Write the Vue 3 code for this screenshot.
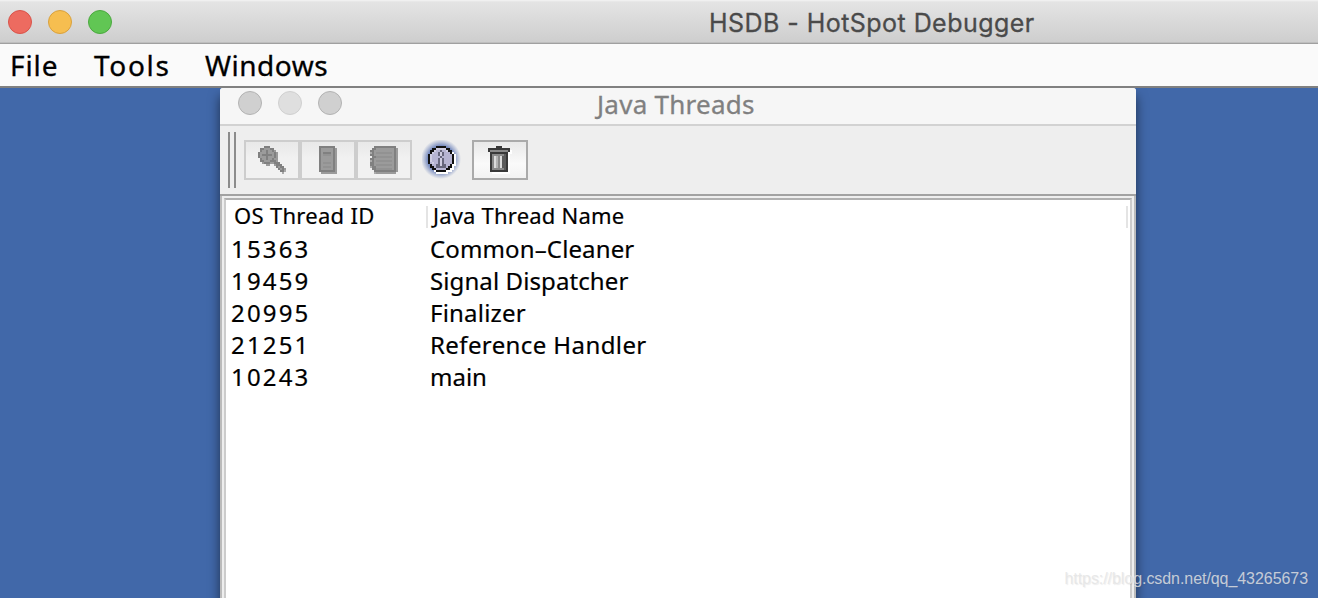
<script setup>
import { ref } from 'vue'

const menus = [
  { label: 'File', cls: 'file' },
  { label: 'Tools', cls: 'tools' },
  { label: 'Windows', cls: 'windows' },
]

const threads = ref([
  { id: '15363', name: 'Common–Cleaner', cls: 'cleaner' },
  { id: '19459', name: 'Signal Dispatcher', cls: 'signal' },
  { id: '20995', name: 'Finalizer', cls: 'finalizer' },
  { id: '21251', name: 'Reference Handler', cls: 'reference' },
  { id: '10243', name: 'main', cls: 'main' },
])

// toolbar icons are tiny bitmaps, one character per pixel
const colors = {
  d: '#808080', m: '#9b9b9b', n: '#929292', l: '#aaaaaa', k: '#111111', w: '#ffffff',
  p: '#b6b4d2', q: '#cfcde2', g: '#66667c', c: '#393939', s: '#8a8a8a',
  t: '#b4b4b4', u: '#dcdcdc', v: '#5c5c5c',
}

const bitmaps = {
  find: [
    '...ddd........',
    '.ddmmmdd......',
    '.dmmdmmdm.....',
    'dmmmdmmmdm....',
    'dmdddddmdm....',
    'dmmmdmmmdm....',
    '.dmmdmmdmm....',
    '.ddmmmdddm....',
    '..mdddmmddd...',
    '....mm..mddd..',
    '.........dmdd.',
    '..........dmdm',
    '...........ddl',
    '............l.',
  ],
  stack: [
    'dddddddd.',
    'dmmmmmmdm',
    'dmmmmmmdm',
    'dmddddmdm',
    'dmnnnnmdm',
    'dmmmmmmdm',
    'dmmmmmmdm',
    'dmmmmmmdm',
    'dmnnnnmdm',
    'dmmmmmmdm',
    'dmnnnnmdm',
    'dmmmmmmdm',
    'ddddddddm',
    '.mmmmmmmm',
  ],
  memory: [
    '..ddddddddddd.',
    '.ddmmmmmmmmmdm',
    'ddmmmmmmmmmmdm',
    'ldmnnnnnnnnmdm',
    'ddmmmmmmmmmmdm',
    '.ddnnnnnnnnmdm',
    'ddmmmmmmmmmmdm',
    'ldmnnnnnnnnmdm',
    'ddmmmmmmmmmmdm',
    'ddmnnnnnnnnmdm',
    'lddmmmmmmmmmdm',
    '.ddnnnnnnnnmdm',
    '..dddddddddddm',
    '..lmmmmmmmmmm.',
  ],
  info: [
    '....kkkkk.....',
    '..kkqqqqqkk...',
    '.kkqppgppqkk..',
    '.kqppgqgpppkw.',
    'kqpppgqgppppkw',
    'kqppppgpppppkw',
    'kqpppgqgppppkw',
    'kqpppgqgppppkw',
    'kpqppgqgppppkw',
    '.kppggqggppkww',
    '.kkpgggggpkkw.',
    '..kkpppppkkww.',
    '...wkkkkkwww..',
    '....wwwwww....',
  ],
  trash: [
    '....ccc....',
    'ccccccccccc.',
    'cssssssssscw',
    '.cccccccccww',
    '.cssssssvcw',
    '.csutsuvvcw',
    '.csutsuvvcw',
    '.csutsuvvcw',
    '.csutsuvvcw',
    '.csutsuvvcw',
    '.csutsuvvcw',
    '.cssssssvcw',
    '.cccccccccw',
    '..wwwwwwwww',
  ],
}

function pixels(name) {
  return bitmaps[name].flatMap((row, y) =>
    [...row].map((ch, x) => ({ x, y, fill: colors[ch] })).filter(p => p.fill)
  )
}

const buttons = [
  { icon: 'find', w: 14 },
  { icon: 'stack', w: 9 },
  { icon: 'memory', w: 14 },
  { icon: 'info', w: 14 },
  { icon: 'trash', w: 12 },
]
</script>

<template>
  <div class="app">
    <header class="titlebar">
      <div class="lights">
        <i class="red"></i><i class="yellow"></i><i class="green"></i>
      </div>
      <h1><span>HSDB - HotSpot Debugger</span></h1>
    </header>

    <nav class="menubar">
      <span v-for="m in menus" :key="m.label" :class="m.cls">{{ m.label }}</span>
    </nav>

    <main class="desktop">
      <section class="frame">
        <div class="frame-title">
          <div class="lights inactive"><i></i><i class="faint"></i><i></i></div>
          <h2><span>Java Threads</span></h2>
        </div>
        <div class="toolbar">
          <div class="grip"></div>
          <button v-for="b in buttons" :key="b.icon" :class="b.icon">
            <svg :width="b.w * 2" height="28" :viewBox="`0 0 ${b.w} 14`" shape-rendering="crispEdges">
              <rect v-for="(p, i) in pixels(b.icon)" :key="i" :x="p.x" :y="p.y" width="1" height="1" :fill="p.fill" />
            </svg>
          </button>
        </div>
        <div class="content">
          <div class="table">
            <div class="row head">
              <div class="id"><span>OS Thread ID</span></div>
              <div class="name"><span>Java Thread Name</span></div>
            </div>
            <div v-for="t in threads" :key="t.id" class="row">
              <div class="id">{{ t.id }}</div>
              <div class="name" :class="t.cls">{{ t.name }}</div>
            </div>
          </div>
        </div>
      </section>
    </main>

    <div class="watermark">https://blog.csdn.net/qq_43265673</div>
  </div>
</template>

<style>
body {
  margin: 0;
  overflow: hidden;
}
</style>

<style scoped>
.app {
  position: relative;
  width: 1318px;
  height: 598px;
  display: flex;
  flex-direction: column;
  overflow: hidden;
  box-sizing: border-box;
  font-family: "Noto Sans", "Open Sans", sans-serif;
  color: #000;
  white-space: nowrap;
}

.app * {
  box-sizing: border-box;
}

.titlebar {
  flex: none;
  height: 44px;
  display: flex;
  background: linear-gradient(#f4f4f4 0, #e4e4e4 2px, #cecece 42px);
  border-bottom: 1px solid #a0a0a0;
  box-shadow: inset 0 -1px #bebebe;
}

.titlebar h1 {
  margin: 0 0 0 597px;
  font-family: "Inter", "Roboto", sans-serif;
  font-size: 25px;
  font-weight: 400;
  line-height: 46px;
  letter-spacing: 0.45px;
  color: #4a4a4a;
  -webkit-text-stroke: 0.3px #4a4a4a;
}

.lights {
  display: flex;
  gap: 16px;
  padding: 10px 0 0 8px;
}

.lights i {
  width: 24px;
  height: 24px;
  border-radius: 50%;
  border: 1px solid #d9534a;
  background: #ed6b60;
}

.lights .yellow {
  background: #f6be50;
  border-color: #d9a13d;
}

.lights .green {
  background: #61c654;
  border-color: #4ba93f;
}

.menubar {
  flex: none;
  position: relative;
  z-index: 1;
  height: 44px;
  display: flex;
  background: #fafafa;
  border-bottom: 2px solid #808080;
  font-size: 28px;
  line-height: 43px;
  -webkit-text-stroke: 0.3px #000;
}

.file { width: 84px; margin-left: 10px; letter-spacing: 0.9px; }
.tools { width: 111px; letter-spacing: 1.7px; }
.windows { letter-spacing: 0.5px; }

.desktop {
  flex: 1;
  display: flex;
  background: #4168a9;
}

.frame {
  width: 916px;
  margin-left: 220px;
  display: flex;
  flex-direction: column;
  background: #eee;
  border-radius: 3px 3px 0 0;
  box-shadow: 0 8px 12px rgba(0, 0, 0, 0.55);
}

.frame-title {
  flex: none;
  height: 38px;
  display: flex;
  background: #f6f6f6;
  border-bottom: 2px solid #d2d2d2;
  border-radius: 3px 3px 0 0;
}

.inactive {
  padding: 3px 0 0 18px;
}

.inactive i {
  background: #d0d0d0;
  border-color: #b3b3b3;
}

.inactive .faint {
  background: #dfdfdf;
  border-color: #d0d0d0;
}

.frame-title h2 {
  margin: 0 0 0 255px;
  font-size: 26px;
  font-weight: 400;
  line-height: 32px;
  letter-spacing: 0.25px;
  color: #808080;
  -webkit-text-stroke: 0.3px #808080;
}

.toolbar {
  flex: none;
  height: 70px;
  display: flex;
  align-items: flex-start;
  padding: 14px 0 0 8px;
  border-bottom: 2px solid #a2a2a2;
}

.grip {
  width: 8px;
  height: 56px;
  margin: -8px 8px 0 0;
  border: solid #8c8c8c;
  border-width: 0 2px;
}

.toolbar button {
  width: 56px;
  height: 40px;
  padding: 4px 0 0;
  display: flex;
  justify-content: center;
  border: 2px solid #cdcdcd;
  background: linear-gradient(#e8e8e8, #f1f1f1 45%, #f1f1f1);
}

.toolbar .info {
  width: 40px;
  margin: 0 10px;
  padding: 6px 0 0;
  border: none;
  background: radial-gradient(circle at 19px 19px, #7186bc 0, #7186bc 13px, #abb6d3 16px, rgba(238, 238, 238, 0) 20px);
}

.toolbar .trash {
  border-color: #aaa;
  background: linear-gradient(#e8e8e8, #fafafa 60%, #f2f2f2);
}

.content {
  flex: 1;
  display: flex;
  padding: 2px 2px 0;
  border: solid #bbb;
  border-width: 0 2px;
}

.table {
  flex: 1;
  background: #fff;
  border: 2px solid #ccc;
  border-top-color: #b0b0b0;
  border-bottom: none;
}

.row {
  height: 32px;
  display: flex;
  font-size: 24px;
  line-height: 29px;
  -webkit-text-stroke: 0.2px #000;
}

.row .id {
  width: 204px;
  padding-left: 5px;
  letter-spacing: 2.15px;
}

.cleaner { letter-spacing: 0.13px; }
.signal { letter-spacing: 0.1px; }
.finalizer { letter-spacing: 0.2px; }
.reference { letter-spacing: 0.4px; }
.main { letter-spacing: 0; }

.head {
  height: 34px;
  font-size: 22px;
  line-height: 18px;
  padding-top: 6px;
  padding-right: 2px;
}

.head .id {
  width: 202px;
  height: 22px;
  padding-left: 8px;
  letter-spacing: 0.3px;
  border-right: 2px solid #e4e4e4;
}

.head .name {
  flex: 1;
  height: 22px;
  padding-left: 5px;
  letter-spacing: 0.2px;
  border-right: 2px solid #e4e4e4;
}

.watermark {
  position: absolute;
  right: 10px;
  bottom: 9px;
  font: 16px/20px "Liberation Sans", Arial, sans-serif;
  letter-spacing: -0.06px;
  color: rgba(228, 228, 228, 0.82);
  text-shadow: 1px 1px 1px rgba(80, 80, 80, 0.1);
}
</style>
